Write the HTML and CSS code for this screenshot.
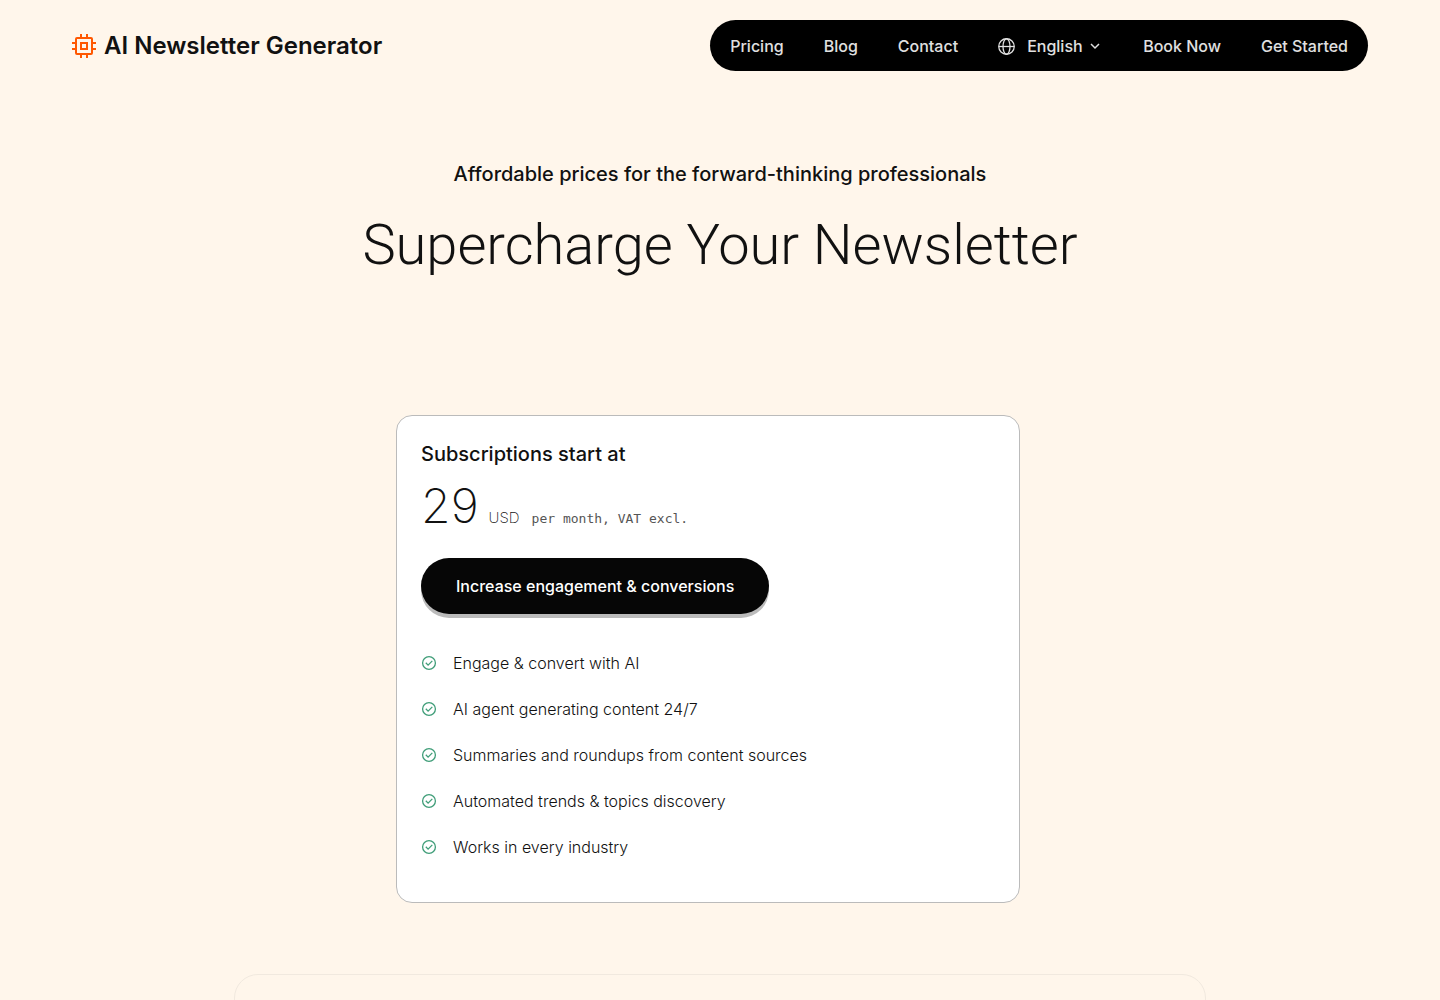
FILE: index.html
```
<!DOCTYPE html>
<html lang="en">
<head>
  <meta charset="UTF-8">
  <meta name="viewport" content="width=device-width, initial-scale=1.0">
  <title>Pricing - AI Newsletter Generator</title>
  <link rel="stylesheet" href="styles.css">
</head>
<body>
  <header class="header">
    <a href="#" class="logo">
      <svg class="logo-icon" viewBox="0 0 24 24" fill="none" stroke="currentColor" stroke-width="2">
        <rect x="4" y="4" width="16" height="16" rx="1"/>
        <rect x="9" y="9" width="6" height="6"/>
        <path d="M9 0v4M15 0v4M9 20v4M15 20v4M0 9h4M0 15h4M20 9h4M20 15h4"/>
      </svg>
      <span>AI Newsletter Generator</span>
    </a>

    <nav class="nav">
      <a href="#">Pricing</a>
      <a href="#">Blog</a>
      <a href="#">Contact</a>
      <div class="language">
        <svg class="globe" viewBox="0 0 16 16" fill="none" stroke="currentColor" stroke-width="1.2">
          <circle cx="8" cy="8" r="7.3"/>
          <ellipse cx="8" cy="8" rx="3.3" ry="7.3"/>
          <path d="M.7 8h14.6"/>
        </svg>
        <select class="language-select" aria-label="Language">
          <option>English</option>
        </select>
        <svg class="chevron" viewBox="0 0 10 10" fill="none" stroke="currentColor" stroke-width="1.5">
          <path d="M1 3l4 4 4-4"/>
        </svg>
      </div>
      <a href="#">Book Now</a>
      <a href="#">Get Started</a>
    </nav>
  </header>

  <main>
    <section class="hero">
      <p class="subtitle">Affordable prices for the forward-thinking professionals</p>
      <h1>Supercharge Your Newsletter</h1>
    </section>

    <section class="pricing">
      <div class="card">
        <h2>Subscriptions start at</h2>
        <p class="price">
          <span class="amount">29</span>
          <span class="currency">USD</span>
          <span class="period">per month, VAT excl.</span>
        </p>
        <button type="button" class="cta">Increase engagement &amp; conversions</button>
        <ul class="features">
          <li>
            <svg class="check" viewBox="0 0 16 16" fill="none" stroke="currentColor" stroke-width="1.3"><circle cx="8" cy="8" r="6.4"/><path d="M4.8 7.8l2.3 2.3 4.2-4.2"/></svg>
            Engage &amp; convert with AI
          </li>
          <li>
            <svg class="check" viewBox="0 0 16 16" fill="none" stroke="currentColor" stroke-width="1.3"><circle cx="8" cy="8" r="6.4"/><path d="M4.8 7.8l2.3 2.3 4.2-4.2"/></svg>
            AI agent generating content 24/7
          </li>
          <li>
            <svg class="check" viewBox="0 0 16 16" fill="none" stroke="currentColor" stroke-width="1.3"><circle cx="8" cy="8" r="6.4"/><path d="M4.8 7.8l2.3 2.3 4.2-4.2"/></svg>
            Summaries and roundups from content sources
          </li>
          <li>
            <svg class="check" viewBox="0 0 16 16" fill="none" stroke="currentColor" stroke-width="1.3"><circle cx="8" cy="8" r="6.4"/><path d="M4.8 7.8l2.3 2.3 4.2-4.2"/></svg>
            Automated trends &amp; topics discovery
          </li>
          <li>
            <svg class="check" viewBox="0 0 16 16" fill="none" stroke="currentColor" stroke-width="1.3"><circle cx="8" cy="8" r="6.4"/><path d="M4.8 7.8l2.3 2.3 4.2-4.2"/></svg>
            Works in every industry
          </li>
        </ul>
      </div>
    </section>

    <section class="panel"></section>
  </main>
</body>
</html>
```
FILE: styles.css
```
:root {
  --background: #fff6eb;
  --text: #111;
  --orange: #ff5700;
  --green: #3f9d78;
}

* {
  box-sizing: border-box;
}

body {
  margin: 0;
  background: var(--background);
  color: var(--text);
  font-family: Inter, "Liberation Sans", sans-serif;
  font-size: 16px;
  line-height: 24px;
}

h1, h2, p, ul {
  margin: 0;
  padding: 0;
}

.header {
  display: flex;
  align-items: center;
  justify-content: space-between;
  padding: 20px 72px 0;
}

.logo {
  display: flex;
  align-items: center;
  gap: 8px;
  color: var(--text);
  font-size: 24px;
  font-weight: 600;
  text-decoration: none;
}

.logo-icon {
  width: 24px;
  height: 24px;
  color: var(--orange);
}

.nav {
  display: flex;
  align-items: center;
  gap: 40px;
  padding: 14px 20px 13px;
  border-radius: 26px;
  background: #000;
  color: #e0e0e0;
  font-weight: 500;
}

.nav a {
  color: inherit;
  text-decoration: none;
}

.language {
  display: flex;
  align-items: center;
}

.globe {
  width: 17px;
  height: 17px;
  margin-right: 12px;
}

.language-select {
  appearance: none;
  padding: 0;
  border: 0;
  background: transparent;
  color: inherit;
  font: inherit;
}

.chevron {
  width: 10px;
  height: 10px;
  margin: 0 3px 0 7px;
}

.hero {
  padding: 88px 20px 0;
  text-align: center;
}

.subtitle {
  font-size: 20px;
  font-weight: 500;
  line-height: 30px;
}

h1 {
  margin-top: 20px;
  font-family: Roboto, "Liberation Sans", sans-serif;
  font-size: 56px;
  font-weight: 300;
  line-height: 72px;
}

.pricing {
  max-width: 648px;
  margin: 134px auto 0;
  padding-right: 24px;
}

.card {
  padding: 24px 24px 32px;
  border: 1px solid #bbb;
  border-radius: 16px;
  background: #fff;
}

h2 {
  margin-bottom: 2px;
  font-size: 20px;
  font-weight: 500;
  line-height: 28px;
}

.price {
  display: flex;
  align-items: baseline;
  height: 72px;
  line-height: 72px;
}

.amount {
  margin-right: 10px;
  font-size: 48px;
  font-weight: 200;
}

.currency {
  margin-right: 12px;
  font-size: 15px;
  font-weight: 200;
}

.period {
  color: #555;
  font-family: "DejaVu Sans Mono", monospace;
  font-size: 13px;
}

.cta {
  display: block;
  margin-top: 16px;
  padding: 16px 35px;
  border: 0;
  border-radius: 28px;
  background: #060606;
  box-shadow: 0 4px 0 #bbb;
  color: #fff;
  font-family: inherit;
  font-size: 16px;
  font-weight: 500;
  line-height: 24px;
  cursor: pointer;
}

.features {
  margin-top: 26px;
  list-style: none;
}

.features li {
  display: flex;
  align-items: center;
  gap: 16px;
  padding: 11px 0;
  font-weight: 300;
}

.check {
  width: 16px;
  height: 16px;
  color: var(--green);
}

.panel {
  max-width: 972px;
  min-height: 240px;
  margin: 71px auto 0;
  border: 1px solid #f1e9df;
  border-radius: 24px;
}
```
